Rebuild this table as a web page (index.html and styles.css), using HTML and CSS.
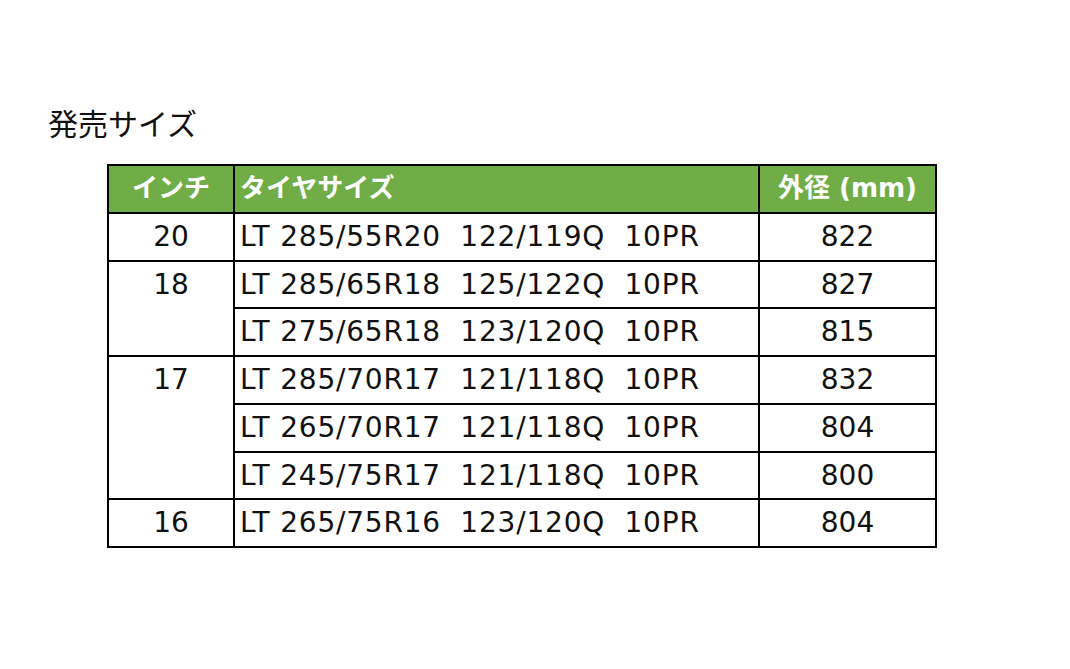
FILE: index.html
```html
<!DOCTYPE html>
<html lang="ja">
<head>
<meta charset="utf-8">
<link rel="stylesheet" href="styles.css">
</head>
<body>
<div class="page">
  <h1 class="title">発売サイズ</h1>
  <table class="sizes">
    <colgroup>
      <col class="c-inch">
      <col class="c-size">
      <col class="c-dia">
    </colgroup>
    <thead>
      <tr>
        <th class="center">インチ</th>
        <th class="left">タイヤサイズ</th>
        <th class="center">外径 (mm)</th>
      </tr>
    </thead>
    <tbody>
      <tr><td class="center">20</td><td class="left spec">LT 285/55R20&nbsp; 122/119Q&nbsp; 10PR</td><td class="center">822</td></tr>
      <tr><td class="center" rowspan="2">18</td><td class="left spec">LT 285/65R18&nbsp; 125/122Q&nbsp; 10PR</td><td class="center">827</td></tr>
      <tr><td class="left spec">LT 275/65R18&nbsp; 123/120Q&nbsp; 10PR</td><td class="center">815</td></tr>
      <tr><td class="center" rowspan="3">17</td><td class="left spec">LT 285/70R17&nbsp; 121/118Q&nbsp; 10PR</td><td class="center">832</td></tr>
      <tr><td class="left spec">LT 265/70R17&nbsp; 121/118Q&nbsp; 10PR</td><td class="center">804</td></tr>
      <tr><td class="left spec">LT 245/75R17&nbsp; 121/118Q&nbsp; 10PR</td><td class="center">800</td></tr>
      <tr><td class="center">16</td><td class="left spec">LT 265/75R16&nbsp; 123/120Q&nbsp; 10PR</td><td class="center">804</td></tr>
    </tbody>
  </table>
</div>
</body>
</html>
```

FILE: styles.css
```css
html, body {
  margin: 0;
  padding: 0;
  background: #ffffff;
}

.page {
  padding: 103px 0 0 48px;
  font-family: "DejaVu Sans", "Noto Sans CJK JP", sans-serif;
  color: #111111;
}

.title {
  margin: 0;
  font-family: "Noto Sans CJK JP", sans-serif;
  font-weight: 400;
  font-size: 30px;
  line-height: 38px;
  color: #111111;
}

.sizes {
  margin: 23px 0 0 59px;
  border-collapse: collapse;
  table-layout: fixed;
  width: 828px;
}

.c-inch { width: 126px; }
.c-size { width: 525px; }
.c-dia { width: 177px; }

.sizes th,
.sizes td {
  border: 2px solid #000000;
  height: 45.75px;
  padding: 0 5px;
  vertical-align: top;
  line-height: 45.75px;
  white-space: nowrap;
}

.sizes th {
  background: #70ad47;
  color: #ffffff;
  font-family: "DejaVu Sans", "Noto Sans CJK JP", sans-serif;
  font-weight: 700;
  font-size: 26px;
}

.sizes td {
  font-size: 28px;
  color: #111111;
}

.sizes td.spec {
  letter-spacing: 0.8px;
}

.center { text-align: center; }
.left { text-align: left; }
```
